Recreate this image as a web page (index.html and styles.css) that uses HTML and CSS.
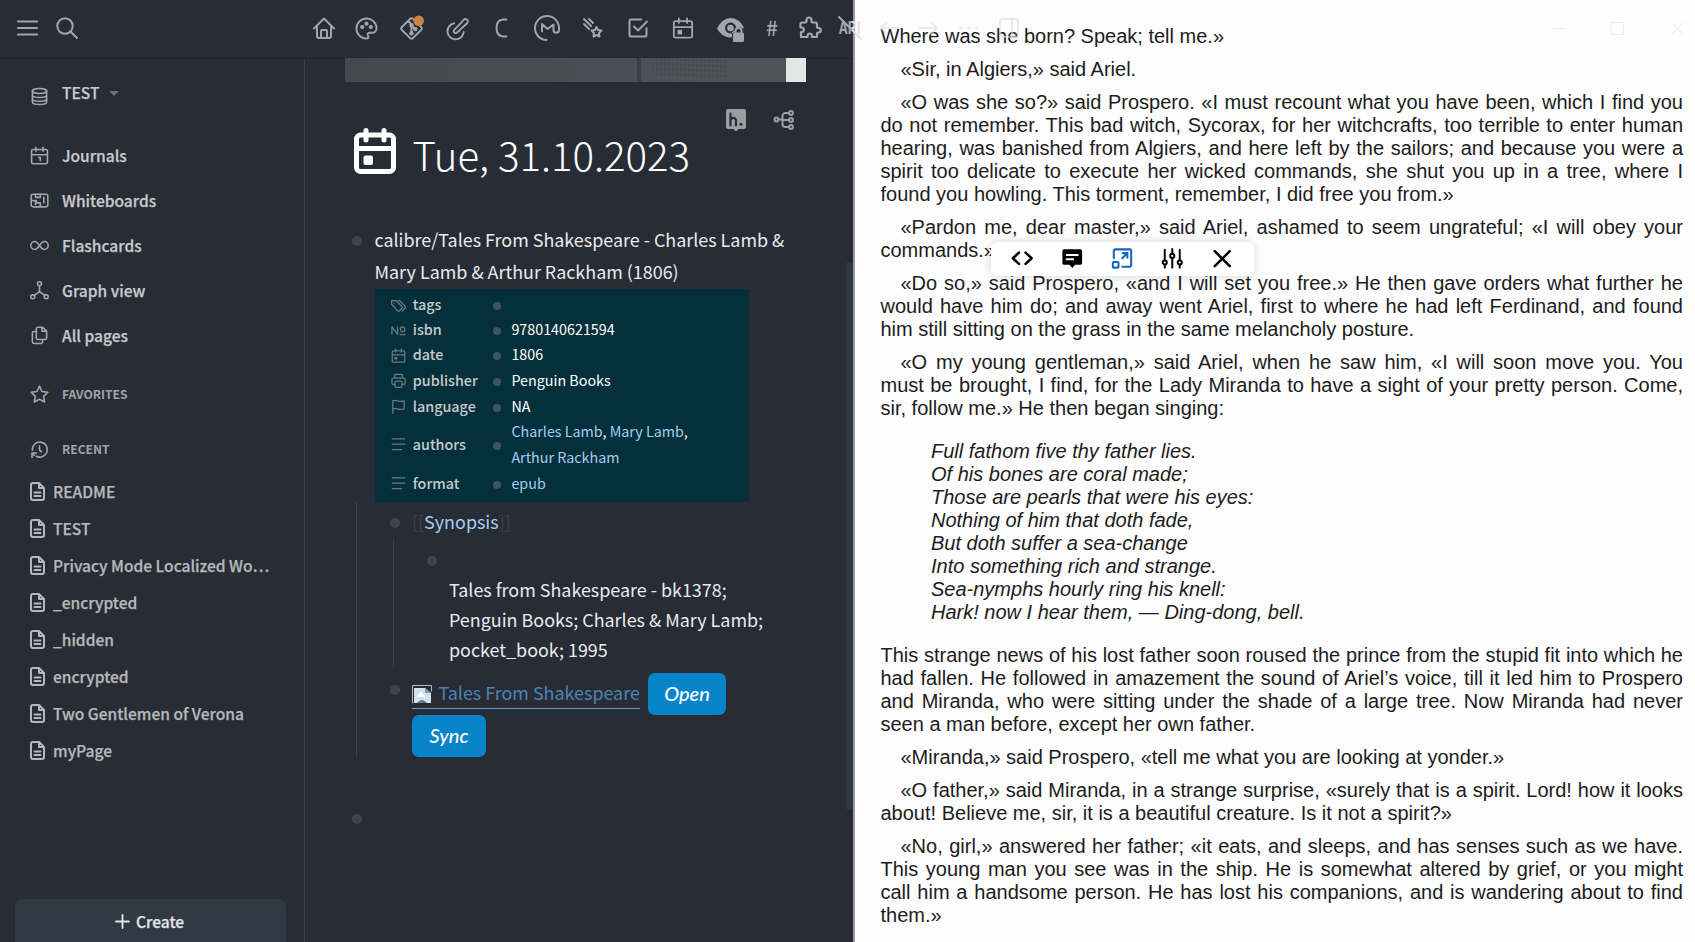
FILE: index.html
```html
<!DOCTYPE html>
<html lang="en">
<head>
<meta charset="utf-8">
<title>Tue, 31.10.2023</title>
<link rel="stylesheet" href="styles.css">
</head>
<body>
<svg class="defs" width="0" height="0" aria-hidden="true">
  <symbol id="file" viewBox="0 0 15 19"><path d="M3 1h6l5 5v10a2 2 0 0 1-2 2H3a2 2 0 0 1-2-2V3a2 2 0 0 1 2-2zM9 1v5h5M4.500 10.500h6M4.500 14h6"/></symbol>
  <symbol id="cal" viewBox="0 0 24 24"><rect x="2" y="4.500" width="20" height="18" rx="2"/><path d="M7.500 1.500v5M16.500 1.500v5M2 11h20"/></symbol>
  <symbol id="lines" viewBox="0 0 24 24"><path d="M2 3h20M2 11.500h20M2 20h15"/></symbol>
</svg>
<div class="app">
  <div class="notes">
    <div class="topline"></div>
    <div class="columns">
      <nav class="sidebar">
        <div class="graph"><svg class="ic" viewBox="0 0 24 24"><ellipse cx="12" cy="5" rx="9" ry="3.200"/><path d="M3 5v14c0 1.800 4 3.200 9 3.200s9-1.400 9-3.200V5M3 10c0 1.800 4 3.200 9 3.200s9-1.400 9-3.200M3 14.700c0 1.800 4 3.200 9 3.200s9-1.400 9-3.200"/></svg><span>TEST</span><i class="caret"></i></div>
        <div class="item"><svg class="ic" viewBox="0 0 24 24"><use href="#cal"/><path d="M11 14.500h2v4"/></svg><span>Journals</span></div>
        <div class="item"><svg class="ic" viewBox="0 0 24 24"><rect x="1.500" y="4" width="21" height="16" rx="2.500"/><path d="M7 4v4h6V4M2 12h6v3h5v4M17.500 8v7M7 12v5"/></svg><span>Whiteboards</span></div>
        <div class="item"><svg class="ic" viewBox="0 0 24 24"><path d="M12 12c-2.500-3.500-4-5-6-5a5 5 0 0 0 0 10c2 0 3.500-1.500 6-5s4-5 6-5a5 5 0 0 1 0 10c-2 0-3.500-1.500-6-5z"/></svg><span>Flashcards</span></div>
        <div class="item"><svg class="ic" viewBox="0 0 24 24"><circle cx="12" cy="3.500" r="2.500"/><circle cx="3.500" cy="20" r="2.500"/><circle cx="20.500" cy="20" r="2.500"/><path d="M12 6v7.500L5.500 18M12 13.500l6.500 4.500"/></svg><span>Graph view</span></div>
        <div class="item"><svg class="ic" viewBox="0 0 24 24"><path d="M10 1.500h6l5 5V15a2 2 0 0 1-2 2h-9a2 2 0 0 1-2-2V3.500a2 2 0 0 1 2-2zM15 1.500v5h6M16 17v3a2 2 0 0 1-2 2H5a2 2 0 0 1-2-2V9a2 2 0 0 1 2-2h3"/></svg><span>All pages</span></div>
        <div class="head fav"><svg class="ic" viewBox="0 0 24 24"><path d="M12 1.500l3.200 6.700 7.300 1-5.300 5.100 1.300 7.200L12 18l-6.500 3.500 1.300-7.200L1.500 9.200l7.300-1z"/></svg><span>FAVORITES</span></div>
        <div class="head rec"><svg class="ic" viewBox="0 0 24 24"><path d="M3 13A9.500 9.500 0 1 1 8 20.500M12 7.500v5l2.500 2.500M2.500 22v-5.500H8M2.500 16.500l3 3"/></svg><span>RECENT</span></div>
        <div class="page"><svg><use href="#file"/></svg><span>README</span></div>
        <div class="page"><svg><use href="#file"/></svg><span>TEST</span></div>
        <div class="page"><svg><use href="#file"/></svg><span>Privacy Mode Localized Wo…</span></div>
        <div class="page"><svg><use href="#file"/></svg><span>_encrypted</span></div>
        <div class="page"><svg><use href="#file"/></svg><span>_hidden</span></div>
        <div class="page"><svg><use href="#file"/></svg><span>encrypted</span></div>
        <div class="page"><svg><use href="#file"/></svg><span>Two Gentlemen of Verona</span></div>
        <div class="page"><svg><use href="#file"/></svg><span>myPage</span></div>
        <div class="create"><svg viewBox="0 0 13 13"><path d="M6.500 0v13M0 6.500h13"/></svg><span>Create</span></div>
      </nav>
      <main class="main">
        <div class="banner"><div class="b1"></div><div class="b2"><i></i><i></i><i></i><i></i></div><div class="b3"></div></div>
        <div class="actions">
          <svg class="hyp" viewBox="0 0 20 23"><path d="M2 0h16a2 2 0 0 1 2 2v16a2 2 0 0 1-2 2h-5.500L10 22.500 7.500 20H2a2 2 0 0 1-2-2V2a2 2 0 0 1 2-2z"/><path class="hl" d="M4.500 4.500v12M4.500 12c0-4 5.500-4 5.500-.5v5"/><circle cx="15" cy="15.200" r="1.500"/></svg>
          <svg class="mind" viewBox="0 0 20 20"><circle cx="2.500" cy="9.500" r="1.900"/><circle cx="17" cy="3" r="1.900"/><circle cx="17" cy="10" r="1.900"/><circle cx="17" cy="17" r="1.900"/><path d="M4.500 9.500h4M15 3h-3.500a3 3 0 0 0-3 3v8a3 3 0 0 0 3 3H15M8.500 10H15"/></svg>
        </div>
        <div class="title"><svg viewBox="0 0 42 46"><rect x="2.500" y="7" width="37" height="36.500" rx="4"/><path d="M2.500 20.500h37M12 2.500v9.500M30 2.500v9.500"/><rect class="dot" x="9.500" y="27.500" width="9.500" height="9.500" rx="2"/></svg><h1>Tue, 31.10.2023</h1></div>
        <section class="block root">
          <i class="bullet"></i>
          <div class="body"><p class="txt">calibre/Tales From Shakespeare - Charles Lamb &amp;<br>Mary Lamb &amp; Arthur Rackham (1806)</p>
            <div class="props">
              <div class="row tags"><svg viewBox="0 0 24 24"><path d="M1 4v6l9.500 10.500a2 2 0 0 0 3 0l4-4a2 2 0 0 0 0-3L8 4zM12 4h1.500l9 9a2 2 0 0 1 0 3l-4.500 5M5 8v.1"/></svg><b>tags</b><i></i><span></span></div>
              <div class="row"><svg viewBox="0 0 24 24"><path d="M1.500 18V6l9 12V6M14.500 18.500h8"/><ellipse cx="18.500" cy="10" rx="3.500" ry="4"/></svg><b>isbn</b><i></i><span>9780140621594</span></div>
              <div class="row date"><svg viewBox="0 0 24 24"><use href="#cal"/><rect x="6.500" y="15" width="2.500" height="2.500"/></svg><b>date</b><i></i><span>1806</span></div>
              <div class="row tall"><svg viewBox="0 0 24 24"><path d="M6 8V2h12v6M6 18H3a1.500 1.500 0 0 1-1.500-1.500V10A2 2 0 0 1 3.500 8h17a2 2 0 0 1 2 2v6.500A1.500 1.500 0 0 1 21 18h-3"/><rect x="6.500" y="13" width="11" height="10" rx="2"/></svg><b>publisher</b><i></i><span>Penguin Books</span></div>
              <div class="row"><svg viewBox="0 0 24 24"><path d="M3 23V3c5-3 10 3 18 0v13c-8 3-13-3-18 0"/></svg><b>language</b><i></i><span>NA</span></div>
              <div class="row two"><svg viewBox="0 0 24 24"><use href="#lines"/></svg><b>authors</b><i></i><span><a>Charles Lamb</a>, <a>Mary Lamb</a>,<br><a>Arthur Rackham</a></span></div>
              <div class="row"><svg viewBox="0 0 24 24"><use href="#lines"/></svg><b>format</b><i></i><span><a>epub</a></span></div>
            </div>
          </div>
        </section>
        <div class="kids">
          <section class="block syn"><i class="bullet"></i><p class="txt"><em>[[</em><a>Synopsis</a><em>]]</em></p></section>
          <div class="kids inner"><section class="block quote"><i class="bullet"></i><p class="txt sm">Tales from Shakespeare - bk1378;<br>Penguin Books; Charles &amp; Mary Lamb;<br>pocket_book; 1995</p></section></div>
          <section class="block links"><i class="bullet"></i><div class="wrap">
            <a class="ext"><svg viewBox="0 0 20 18"><path class="fr" d="M.5 18V.5h19V6"/><path class="pg" d="M2 3h11l6 5v10H2z"/><path class="fold" d="M13 3v5h6z"/><path class="cl" d="M4 12l5-5 4 4v1z"/><path class="hill" d="M5 18q5-6 10 0z"/></svg><span>Tales From Shakespeare</span></a>
            <button class="open">Open</button><button class="sync">Sync</button></div></section>
        </div>
        <section class="block last"><i class="bullet"></i></section>
        <div class="thumb"></div>
      </main>
    </div>
  </div>
  <article class="reader">
    <p class="first">Where was she born? Speak; tell me.»</p>
    <p>«Sir, in Algiers,» said Ariel.</p>
    <p>«O was she so?» said Prospero. «I must recount what you have been, which I find you do not remember. This bad witch, Sycorax, for her witchcrafts, too terrible to enter human hearing, was banished from Algiers, and here left by the sailors; and because you were a spirit too delicate to execute her wicked commands, she shut you up in a tree, where I found you howling. This torment, remember, I did free you from.»</p>
    <p>«Pardon me, dear master,» said Ariel, ashamed to seem ungrateful; «I will obey your commands.»</p>
    <p>«Do so,» said Prospero, «and I will set you free.» He then gave orders what further he would have him do; and away went Ariel, first to where he had left Ferdinand, and found him still sitting on the grass in the same melancholy posture.</p>
    <p>«O my young gentleman,» said Ariel, when he saw him, «I will soon move you. You <span class="keep">must be</span> brought, I find, for the Lady Miranda to have a sight of your pretty person. Come, <span class="keep">sir, follow</span> me.» He then began singing:</p>
    <div class="verse">Full fathom five thy father lies.<br>Of his bones are coral made;<br>Those are pearls that were his eyes:<br>Nothing of him that doth fade,<br>But doth suffer a sea-change<br>Into something rich and strange.<br>Sea-nymphs hourly ring his knell:<br>Hark! now I hear them, — Ding-dong, bell.</div>
    <p class="first">This strange news of his lost father soon roused the prince from the stupid fit into which he had fallen. He followed in amazement the sound of Ariel’s voice, till it led him to Prospero and Miranda, who were sitting under the shade of a large tree. Now Miranda had never seen a man before, except her own father.</p>
    <p>«Miranda,» said Prospero, «tell me what you are looking at yonder.»</p>
    <p>«O father,» said Miranda, in a strange surprise, «surely that is a spirit. Lord! how it looks about! Believe me, sir, it is a beautiful creature. Is it not a spirit?»</p>
    <p>«No, girl,» answered her father; «it eats, and sleeps, and has senses such as we have. This young man you see was in the ship. He is somewhat altered by grief, or you might call him a handsome person. He has lost his companions, and is wandering about to find them.»</p>
  </article>
</div>
<header class="toolbar">
  <svg class="t menu" viewBox="0 0 20 16"><path d="M0 1.500h19M0 8h19M0 14.500h19"/></svg>
  <svg class="t search" viewBox="0 0 22 22"><circle cx="9" cy="9" r="7.700"/><path d="M14.500 14.500l6.500 6.500"/></svg>
  <svg class="t home" viewBox="0 0 24 24"><path d="M2 12.500L12 2.500l10 10M5 11v9a2 2 0 0 0 2 2h10a2 2 0 0 0 2-2v-9M9 22v-7a1 1 0 0 1 1-1h4a1 1 0 0 1 1 1v7"/></svg>
  <svg class="t pal" viewBox="0 0 24 24"><path d="M12 22.500a10.500 10.500 0 1 1 10.500-11c0 3-2 5-4.500 5h-3a2 2 0 0 0-1.200 3.500c.8 1 .2 2.500-1.800 2.500z"/><g class="f"><circle cx="7.500" cy="10.500" r="2.200"/><circle cx="12" cy="7" r="2.200"/><circle cx="16.500" cy="10.500" r="2.200"/></g></svg>
  <svg class="t git" viewBox="0 0 24 24"><path d="M10.500 2L1.500 11a1.500 1.500 0 0 0 0 2l9 9a2 2 0 0 0 3 0l9-9a1.500 1.500 0 0 0 0-2l-9-9a2 2 0 0 0-3 0zM9 4l3 4v10M12 9l4 4"/><g class="f"><circle cx="12" cy="8.500" r="2.300"/><circle cx="12" cy="17" r="2.300"/><circle cx="16" cy="12.500" r="2.300"/></g><circle class="badge" cx="19.500" cy="4" r="5.500"/></svg>
  <svg class="t brush" viewBox="0 0 24 24"><path d="M8.500 6.500a8.500 8.500 0 1 0 10 9M12.500 9.500l6.500-7c2.500-1.500 5 1.500 3.500 3.500L14 14l-3 2.500c-1.500 1-4-1-2.500-3z"/></svg>
  <svg class="t cc" viewBox="0 0 12 20"><path d="M11.500 1.500H8Q1.500 2 1.500 10T8 18.500h3.500"/></svg>
  <svg class="t em" viewBox="0 0 26 26"><path d="M12.500 25A12 12 0 1 1 25 13v2c0 3.500-5.500 3.500-5.500 0V9.500L13.500 14 8 9v7.500"/></svg>
  <svg class="t star" viewBox="0 0 20 20"><path d="M1 1l7 7M6 1l4 4M1 6l5 5M13.500 9l1.500 3 3.500.5-2.500 2.500.5 3.500-3-1.500-3 1.500.5-3.500L8.500 12.500l3.500-.5z"/></svg>
  <svg class="t chk" viewBox="0 0 20 20"><path d="M13 1.500H3A1.500 1.500 0 0 0 1.500 3v14A1.500 1.500 0 0 0 3 18.500h14a1.500 1.500 0 0 0 1.500-1.500v-7M6 8.500l4 4 9-9"/></svg>
  <svg class="t cal" viewBox="0 0 24 24"><use href="#cal"/><rect class="f" x="6" y="14" width="5" height="5" rx="1"/></svg>
  <svg class="t eye" viewBox="0 0 28 24"><path class="f" fill-rule="evenodd" d="M0 10.500Q5 0 13.500 0T27 9.500l-1 1Q21 7 17 13l-2 1v5.500Q5 20 0 10.500zM13.500 4.500a5.500 5.500 0 1 0 .1 0z"/><circle class="f" cx="13.500" cy="10" r="3.300"/><rect class="f" x="16" y="14.500" width="11" height="9.500" rx="1.500"/><path d="M18.500 15v-2a3 3 0 0 1 6 0v2"/></svg>
  <span class="t hash">#</span>
  <svg class="t puz" viewBox="0 0 24 24"><path d="M4 7.500h3.500a1 1 0 0 0 1-1V5a2.500 2.500 0 0 1 5 0v1.500a1 1 0 0 0 1 1h3a1.500 1.500 0 0 1 1.500 1.500v3a1 1 0 0 0 1 1h1a2.300 2.300 0 0 1 0 4.500h-1a1 1 0 0 0-1 1V22h-5v-1.500a2.300 2.300 0 0 0-4.500 0V22H3v-5h1a2.300 2.300 0 0 0 0-4.500H2.500V9A1.500 1.500 0 0 1 4 7.500z" transform="translate(1 -1)"/></svg>
  <svg class="t api" viewBox="0 0 24 24"><defs><linearGradient id="fade" gradientUnits="userSpaceOnUse" x1="0" y1="0" x2="24" y2="0"><stop offset=".58" stop-color="#a1a6ad"/><stop offset=".58" stop-color="#e0e0e0"/></linearGradient></defs><text x="1" y="18" textLength="22" lengthAdjust="spacingAndGlyphs" fill="url(#fade)">API</text><path d="M1 1l22 22" stroke="url(#fade)"/></svg>
  <svg class="t ghost back" viewBox="0 0 18 14"><path d="M18 7H1M7 1L1 7l6 6"/></svg>
  <svg class="t ghost fwd" viewBox="0 0 18 14"><path d="M0 7h17M11 1l6 6-6 6"/></svg>
  <svg class="t ghost dots" viewBox="0 0 20 4"><path d="M2 2h.1M10 2h.1M18 2h.1"/></svg>
  <svg class="t ghost pane" viewBox="0 0 20 20"><rect x="1" y="1" width="18" height="18" rx="2"/><path d="M13 1v18"/></svg>
  <svg class="t win min" viewBox="0 0 13 13"><path d="M0 6.500h13"/></svg>
  <svg class="t win max" viewBox="0 0 13 13"><path d="M.5.5h12v12H.5z"/></svg>
  <svg class="t win close" viewBox="0 0 13 13"><path d="M.5.500l12 12M12.500.500l-12 12"/></svg>
</header>
<div class="popup">
  <svg viewBox="0 0 24 24"><path d="M8.500 6L2 12l6.500 6M15.500 6l6.500 6-6.500 6"/></svg>
  <svg viewBox="0 0 24 24"><path class="solid" d="M3.500 2.500h17a2 2 0 0 1 2 2V17a2 2 0 0 1-2 2H15l-3 3.500L9 19H3.500a2 2 0 0 1-2-2V4.500a2 2 0 0 1 2-2z"/><path class="cut" d="M6 8.500h12M6 13h7"/></svg>
  <svg class="blue" viewBox="0 0 24 24"><path d="M3 12V4a1.500 1.500 0 0 1 1.500-1.500H20A1.500 1.500 0 0 1 21.500 4v15.500A1.500 1.500 0 0 1 20 21h-8M12 12l5.500-5.500M12.500 6.500h5v5"/><rect x="2" y="16" width="6" height="6" rx="1"/></svg>
  <svg class="thin" viewBox="0 0 24 24"><path d="M4 3v11M4 19v3M12 2v5M12 12v10M20 3v11M20 19v3"/><circle cx="4" cy="16.500" r="2.200"/><circle cx="12" cy="9.500" r="2.200"/><circle cx="20" cy="16.500" r="2.200"/></svg>
  <svg viewBox="0 0 24 24"><path d="M4 4.500l16 16M20 4.500l-16 16"/></svg>
</div>
</body>
</html>
```
FILE: styles.css
```css
* { box-sizing: border-box; }
body { margin: 0; width: 1695px; height: 942px; overflow: hidden; position: relative; background: #fdfdfd; font-family: "Noto Sans CJK SC", "Noto Sans", sans-serif; }
p, h1 { margin: 0; }
svg { display: block; flex: none; overflow: visible; fill: none; stroke: currentColor; stroke-width: 2; stroke-linecap: round; stroke-linejoin: round; }
.defs { position: absolute; }
.app { display: flex; height: 942px; }
.notes { width: 855px; flex: none; background: #282c35; border-right: 2px solid #999; display: flex; flex-direction: column; }
.topline { height: 59px; flex: none; border-bottom: 1px solid #1f232b; }
.columns { flex: 1; display: flex; min-height: 0; }

/* sidebar */
.sidebar { width: 305px; flex: none; border-right: 1px solid #38444d; color: #c6c9cb; font-weight: 500; font-size: 15.550px; -webkit-text-stroke: .25px; display: flex; flex-direction: column; white-space: nowrap; overflow: hidden; }
.sidebar > div { flex: none; }
.ic { width: 19px; height: 19px; margin: 2px 13px 0 30px; color: #a3a6aa; }
.graph { height: 44px; margin: 11px 0 18.500px; display: flex; align-items: center; }
.graph .ic { margin-top: 9px; }
.caret { border: 5px solid transparent; border-top-color: #5f7480; border-bottom: 0; margin: 3px 0 0 10px; }
.item { height: 45px; display: flex; align-items: center; }
.item .ic { margin-top: 0; }
.head { height: 30px; display: flex; align-items: center; font-size: 12.100px; color: #a0a3a7; font-weight: 700; -webkit-text-stroke: 0; }
.fav { margin-top: 20.500px; }
.rec { margin: 25px 0 9.500px; }
.page { height: 37px; display: flex; align-items: center; color: #b5b8bb; }
.page svg { width: 15px; height: 19px; margin: 1px 8px 0 30px; }
.create { margin: 130px 0 0 15px; width: 271px; height: 50px; padding: 0 0 5px 101px; border-radius: 8px 8px 0 0; background: #313942; color: #e3e5e6; display: flex; align-items: center; gap: 7px; }
.create svg { width: 13px; height: 13px; stroke-width: 1.800; }

/* page content */
.main { flex: 1; position: relative; padding-left: 40px; color: #e9eaeb; }
.banner { width: 461px; height: 24px; margin-top: -1px; display: flex; }
.b1 { width: 296px; background: linear-gradient(90deg, #46494c, #4b4f57); border-right: 4px solid #3a3f47; }
.b2 { width: 145px; background: linear-gradient(90deg, #4c5159, #505355); padding: 1px 0 0 11px; }
.b2 i { display: block; width: 74px; height: 2px; margin-bottom: 3px; border-top: 2px dotted #454a51; transform: rotate(2deg); }
.b3 { width: 20px; background: #e5e7e6; }
.actions { display: flex; gap: 28px; padding-left: 381px; margin-top: 27px; height: 19px; color: #9c9ea1; }
.hyp { width: 20px; height: 23px; fill: #9c9ea1; stroke: none; }
.hyp .hl { fill: none; stroke: #282c35; stroke-width: 2.200; }
.hyp circle { fill: #282c35; }
.mind { width: 20px; height: 20px; margin-top: 1px; }
.title { display: flex; align-items: center; height: 50px; padding-left: 9px; gap: 16.500px; color: #fff; }
.title svg { width: 42px; height: 46px; stroke-width: 5; margin-bottom: 4px; }
.title .dot { fill: #fff; stroke: none; }
h1 { font-size: 40.200px; line-height: 51px; font-weight: 300; white-space: nowrap; }
.block { display: flex; }
.bullet { width: 10px; height: 10px; border-radius: 50%; background: #3b4750; flex: none; }
.root { padding: 45px 0 0 7px; }
.root > .bullet { margin: 13px 12.500px 0 0; }
.txt { font-size: 17.920px; line-height: 32px; white-space: nowrap; }
.txt a, .props a { color: #a3cdf2; }
.props { width: 374px; height: 213px; margin-top: 2px; padding: 2px 0 0 16px; background: #05303b; font-size: 14.320px; line-height: 26px; }
.row { height: 25px; display: grid; grid-template-columns: 15px 76px 9px 1fr; align-items: center; column-gap: 7.300px; white-space: nowrap; }
.row svg { width: 15px; height: 15px; color: #6d7a80; margin-top: 2px; }
.row b { font-weight: 500; color: #c5cacc; }
.row i { width: 8px; height: 8px; border-radius: 50%; background: #3c5560; margin: 4px 0 0 -3px; }
.row span { margin-left: -1px; color: #fff; }
.tags { height: 25.400px; }
.date { height: 25.600px; }
.tall { height: 26px; }
.two { height: 52px; }
.kids { margin-left: 11px; border-left: 1px solid #3b424b; height: 255px; }
.syn { height: 37px; padding-left: 33px; }
.syn .bullet { margin: 16px 12px 0 0; }
.syn .txt { line-height: 38px; }
.txt em { font-style: normal; color: #3b424b; }
.inner { margin-left: 36px; height: 128px; }
.quote { padding-left: 33px; }
.quote .bullet { margin: 17px 12px 0 0; }
.txt.sm { line-height: 30.200px; padding-top: 35px; }
.links { padding: 6px 0 0 33px; }
.links .bullet { margin: 12px 12px 0 0; }
.wrap { display: flex; flex-wrap: wrap; width: 330px; column-gap: 8px; }
.ext { width: 228px; height: 33px; margin-top: 3px; display: flex; align-items: center; gap: 6.500px; color: #4a83b5; border-bottom: 1px solid #5f9cc9; font-size: 17.920px; line-height: 30px; white-space: nowrap; }
.ext svg { width: 20px; height: 18px; margin-top: 4px; stroke: none; }
.ext .fr { stroke: #b8bbbd; stroke-width: 1; }
.pg { fill: #cfe3ee; } .fold { fill: #8a9499; } .cl { fill: #fff; } .hill { fill: #68737a; }
button { border: 0; padding: 0 0 2px; height: 42px; border-radius: 7px; background: #0584ca; color: #fff; font: italic 500 20px Lato, sans-serif; }
.open { width: 78px; }
.sync { width: 74px; }
.last { padding: 57px 0 0 7px; }
.thumb { position: absolute; right: 0; top: 204px; width: 7px; height: 546px; background: #2f3841; }

/* book */
.reader { flex: 1; padding: 25px 12px 0 25.500px; font: 20px/23px "Liberation Sans", Arial, sans-serif; color: #1c1c1c; }
.reader p { text-indent: 20px; margin-bottom: 10px; text-align: justify; }
.reader .first { text-indent: 0; }
.keep { white-space: nowrap; }
.verse { font-style: italic; margin: 20px 0 20px 50.500px; white-space: nowrap; }

/* window toolbar, floats over both panes */
.toolbar { position: absolute; inset: 0 0 auto 0; height: 56px; display: flex; align-items: center; color: #a1a6ad; overflow: hidden; }
.t { flex: none; }
.menu { width: 20px; height: 16px; margin-left: 18px; }
.search { width: 22px; height: 22px; margin-left: 18px; }
.home { width: 24px; height: 24px; margin-left: 233.500px; }
.pal { width: 23px; height: 23px; margin-left: 19px; }
.git { width: 23px; height: 23px; margin-left: 22px; }
.brush { width: 23px; height: 23px; margin-left: 23px; }
.cc { width: 12px; height: 20px; margin-left: 26px; }
.em { width: 26px; height: 26px; margin-left: 27px; }
.star { width: 20px; height: 20px; margin-left: 23px; }
.chk { width: 20px; height: 20px; margin-left: 25px; }
.t.cal { width: 22px; height: 22px; margin-left: 24.500px; }
.eye { width: 28px; height: 24px; margin: 3px 0 0 23px; }
.hash { width: 13px; margin: -2px 0 0 21px; font-size: 21px; line-height: 24px; font-weight: 500; }
.puz { width: 24px; height: 24px; margin-left: 17.500px; stroke-width: 2.200; }
.api { width: 24px; height: 24px; margin-left: 17px; }
.api text { font-size: 17px; font-weight: 700; stroke: none; }
.f { fill: currentColor; stroke: none; }
.badge { fill: #cb8243; stroke: none; }
.ghost { color: rgba(222, 222, 222, .6); }
.back { width: 18px; height: 14px; margin-left: 18px; }
.fwd { width: 18px; height: 14px; margin-left: 22px; }
.dots { width: 20px; height: 4px; margin-left: 21px; stroke-width: 3.500; }
.pane { width: 20px; height: 20px; margin-left: 20px; }
.win { width: 13px; height: 13px; stroke-width: 1; color: #ececec; }
.min { margin-left: 533px; }
.max { margin-left: 46px; }
.close { margin-left: 47px; }

.popup { position: absolute; left: 990.500px; top: 241.500px; width: 263px; height: 34px; padding-left: 20px; display: flex; align-items: center; gap: 27.500px; background: #fff; border-radius: 6px; box-shadow: 0 0 10px rgba(0, 0, 0, .16); color: #000; }
.popup svg { width: 22.500px; height: 22.500px; stroke-width: 2.700; }
.popup .solid { fill: #000; stroke: none; }
.popup .cut { stroke: #fff; stroke-width: 2; }
.popup .blue { color: #1467c0; stroke-width: 2.200; }
.popup .thin { stroke-width: 2.100; }
```
